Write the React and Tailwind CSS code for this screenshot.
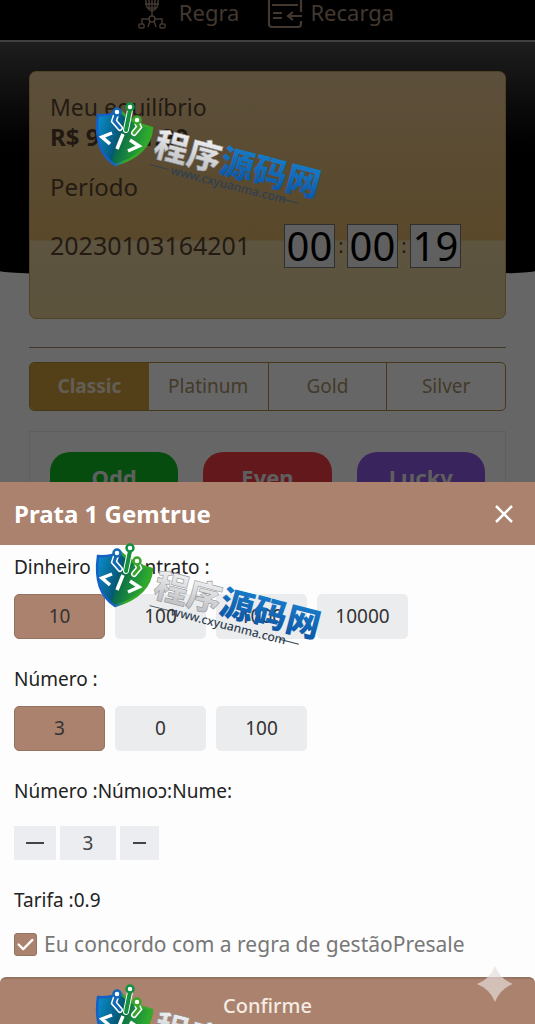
import { useState } from 'react';
import clsx from 'clsx';
import { HiCheck } from 'react-icons/hi';

const TABS = ['Classic', 'Platinum', 'Gold', 'Silver'];
const AMOUNTS = ['10', '100', '1000', '10000'];
const COUNTS = ['3', '0', '100'];
const TIMER = ['00', '00', '19'];
const BETS = [
  { label: 'Odd', color: 'bg-[#0ebe24]' },
  { label: 'Even', color: 'bg-[#f84048]' },
  { label: 'Lucky', color: 'bg-[#905ae8]' },
];

function RulesIcon() {
  return (
    <svg width="30" height="30" viewBox="0 0 30 30" fill="none" stroke="currentColor" strokeWidth="1.5" aria-hidden="true">
      <path d="M9 0v3q0 6 6 8 6-2 6-8V0M8 4h14M12 0v8M18 0v8M15 0v16M11 8h8" />
      <circle cx="15" cy="19" r="3" />
      <path d="M12 19H5v5M18 19h7v5M13 21l-2 6M17 21l2 6" />
      <rect x="2" y="24" width="5" height="4" rx="1" />
      <rect x="23" y="24" width="5" height="4" rx="1" />
    </svg>
  );
}

function RechargeIcon() {
  return (
    <svg width="36" height="30" viewBox="0 0 36 30" fill="none" stroke="currentColor" strokeWidth="2.2" aria-hidden="true">
      <path d="M34 12V0M2 0v24q0 3 3 3h26q3 0 3-3v-3M5 5h26M6 13h9M6 18h9M35 16H22M26 12l-5 4 5 4" />
    </svg>
  );
}

function Watermark() {
  return (
    <svg width="240" height="110" viewBox="0 0 240 110" className="block overflow-visible" aria-hidden="true">
      <defs>
        <linearGradient id="shield" x1="0" y1="0" x2="1" y2="0.3">
          <stop offset="0" stopColor="#0a92d4" />
          <stop offset="0.48" stopColor="#06587a" />
          <stop offset="0.52" stopColor="#0a6b4a" />
          <stop offset="1" stopColor="#2fae2c" />
        </linearGradient>
        <linearGradient id="rim" x1="0" y1="0" x2="1" y2="0">
          <stop offset="0.3" stopColor="#1560c8" />
          <stop offset="0.5" stopColor="#35a82a" />
        </linearGradient>
        <linearGradient id="silver" x1="0" y1="0" x2="0" y2="1">
          <stop offset="0" stopColor="#ffffff" />
          <stop offset="1" stopColor="#b4b6ba" />
        </linearGradient>
        <linearGradient id="blue" x1="0" y1="0" x2="0" y2="1">
          <stop offset="0" stopColor="#1b86d2" />
          <stop offset="1" stopColor="#0b4f9e" />
        </linearGradient>
      </defs>
      {/* shield */}
      <path d="M3 14q12 1 22-4 12 12 32 17-2 27-37 37Q-2 50 3 14z" fill="url(#shield)" stroke="url(#rim)" strokeWidth="2.5" />
      {/* circuit lines */}
      <g fill="none" strokeLinecap="round">
        <path d="M21 14l-2 6 6 7M35 9l-4 20M42 22l2 4-5 6" stroke="#fff" strokeWidth="6" />
        <path d="M21 14l-2 6 6 7" stroke="#1268b4" strokeWidth="3" />
        <path d="M35 9l-4 20" stroke="#159040" strokeWidth="4" />
        <path d="M42 22l2 4-5 6" stroke="#3aa52a" strokeWidth="3" />
      </g>
      <circle cx="22" cy="11" r="3.5" fill="#fff" stroke="#1268b4" strokeWidth="2.5" />
      <circle cx="35" cy="6" r="3.5" fill="#fff" stroke="#159040" strokeWidth="2.5" />
      <circle cx="42" cy="19" r="3.5" fill="#fff" stroke="#3aa52a" strokeWidth="2.5" />
      {/* code brackets */}
      <path d="M17 32 7 36l8 7M28 33l-6 15M35 39l9 6-11 5" fill="none" stroke="#fff" strokeWidth="3.5" />
      {/* wordmark */}
      <g transform="rotate(14.5 57 54)" className="font-['Noto_Sans_CJK_SC',sans-serif] font-black">
        <text x="57" y="54" fontSize="34" fill="url(#silver)" stroke="#8a8c90" strokeWidth="0.5">程序</text>
        <text x="125" y="54" fontSize="34" fill="url(#blue)">源码网</text>
      </g>
      <g transform="rotate(14.5 75 73)">
        <text x="75" y="73" fontSize="12" className="font-['Noto_Sans',sans-serif] font-medium" fill="#2f4050">www.cxyuanma.com</text>
        <path d="M53 69h20M187 69h20" stroke="#2f4050" strokeWidth="1" />
      </g>
    </svg>
  );
}

function OptionRow({ name, options, value, onChange }) {
  return (
    <div className="mt-[15px] flex gap-[10px]">
      {options.map((o) => (
        <button
          key={o}
          type="button"
          aria-label={`${name} ${o}`}
          onClick={() => onChange(o)}
          className={clsx(
            'h-[45px] w-[91px] rounded-[5px] text-[19px] text-[#333]',
            value === o ? 'border border-[#957361] bg-[#aa826d]' : 'bg-[#ebecee]'
          )}
        >
          {o}
        </button>
      ))}
    </div>
  );
}

function GamePage() {
  return (
    <div className="relative min-h-screen bg-white">
      <header className="flex h-[42px] justify-center gap-7 border-b-2 border-[#a0a0a0] bg-black pr-1 text-[#a58c78]">
        <a href="#regra" className="flex h-6 items-start gap-3 text-[22px] leading-6">
          <RulesIcon />
          Regra
        </a>
        <a href="#recarga" className="flex h-6 items-start gap-[7px] text-[22px] leading-6">
          <RechargeIcon />
          Recarga
        </a>
      </header>

      <div className="relative px-[29px] pt-[29px]">
        <div className="absolute inset-x-0 top-0 h-[234px] rounded-b-[50%_5px] bg-linear-to-b from-[#4c4c4c] to-black to-60%" />
        <section className="relative h-[248px] rounded-[7px] border border-[#c9a55c] bg-[linear-gradient(#e6c695,#dfb468_68%,#ead4a2_69%,#e6cf9c_85%,#e6cf98)] px-5 pt-5 text-[24px] text-[#5a4530]">
          <p className="text-[23px] leading-[30px]">Meu equilíbrio</p>
          <p className="leading-[30px] font-bold text-[#54402c]">R$ 99671.20</p>
          <p className="mt-5 leading-[30px]">Período</p>
          <div className="mt-[22px] flex items-center justify-between pr-6">
            <span className="text-[25px]">20230103164201</span>
            <div className="flex items-center text-[#5a4530]">
              {TIMER.map((t, i) => (
                <div key={i} className="flex items-center">
                  {i > 0 && <span className="w-3 text-center text-[20px]">:</span>}
                  <span className="flex h-[44px] w-[51px] items-center justify-center border border-[#777] bg-[#f0f0f0] text-[40px] leading-[42px] text-black">{t}</span>
                </div>
              ))}
            </div>
          </div>
        </section>

        <hr className="mt-7 border-[#a08d60]" />

        <div className="mt-[14px] grid h-[49px] grid-cols-4 overflow-hidden rounded-[5px] border border-[#b08c3c]">
          {TABS.map((t, i) => (
            <button
              key={t}
              type="button"
              className={clsx(
                'text-[19px]',
                i === 0 ? 'bg-[#d0a040] font-bold text-[#f4ead4]' : 'text-[#a9926a]',
                i > 1 && 'border-l border-[#b08c3c]'
              )}
            >
              {t}
            </button>
          ))}
        </div>

        <div className="mt-5 grid grid-cols-3 gap-[25px] border border-[#eee] px-5 pt-5">
          {BETS.map((b) => (
            <button key={b.label} type="button" className={clsx('h-[50px] rounded-[20px] text-[22px] font-bold text-[#eee]', b.color)}>
              {b.label}
            </button>
          ))}
        </div>
      </div>
    </div>
  );
}

function BetSheet() {
  const [amount, setAmount] = useState('10');
  const [count, setCount] = useState('3');
  const [qty, setQty] = useState(3);
  const [agree, setAgree] = useState(true);

  return (
    <div role="dialog" aria-label="Prata 1 Gemtrue" className="bg-[#fdfdfd] text-[19px] text-[#222]">
      <div className="flex h-[63px] items-center justify-between bg-[#aa826d] px-[14px] text-white">
        <h2 className="text-[24px] font-bold">Prata 1 Gemtrue</h2>
        <button type="button" aria-label="Fechar" className="px-2">
          <svg width="18" height="18" viewBox="0 0 18 18" fill="none" stroke="currentColor" strokeWidth="2.5">
            <path d="M1 1l16 16M17 1 1 17" />
          </svg>
        </button>
      </div>

      <div className="px-[14px] pt-[10px]">
        <p className="leading-6">Dinheiro do contrato :</p>
        <OptionRow name="Dinheiro" options={AMOUNTS} value={amount} onChange={setAmount} />

        <p className="mt-7 leading-6">Número :</p>
        <OptionRow name="Número" options={COUNTS} value={count} onChange={setCount} />

        <p className="mt-7 leading-6">Número :Númıoɔ:Nume:</p>
        <div className="mt-[23px] flex h-[34px] gap-1">
          <button type="button" aria-label="Menos" onClick={() => setQty(qty - 1)} className="flex w-[42px] items-center justify-center bg-[#ecedf0]">
            <span className="h-0.5 w-[18px] bg-[#444]" />
          </button>
          <input aria-label="Quantidade" value={qty} onChange={(e) => setQty(Number(e.target.value) || 0)} className="w-14 bg-[#ecedf0] text-center text-[#444]" />
          <button type="button" aria-label="Mais" onClick={() => setQty(qty + 1)} className="flex w-[39px] items-center justify-center bg-[#ecedf0]">
            <span className="h-0.5 w-[13px] bg-[#444]" />
          </button>
        </div>

        <p className="mt-7 leading-6">Tarifa :0.9</p>
        <label className="mt-5 flex items-center gap-[7px] text-[21px] leading-6 text-[#777]">
          <span className="relative flex size-[23px]">
            <input
              type="checkbox"
              checked={agree}
              onChange={(e) => setAgree(e.target.checked)}
              className="size-[23px] appearance-none rounded-[3px] border border-[#957361] checked:bg-[#aa826d]"
            />
            {agree && <HiCheck className="pointer-events-none absolute inset-0 size-[23px] text-white" />}
          </span>
          Eu concordo com a regra de gestãoPresale
        </label>
      </div>

      <button type="button" className="mt-[21px] block h-[47px] w-full rounded-t-[6px] border-t-2 border-[#957361] bg-[#aa826d] pt-2 text-[20px] font-medium text-[#f5ece4]">
        Confirme
      </button>
    </div>
  );
}

export default function App() {
  return (
    <div className="relative h-screen overflow-hidden font-['Noto_Sans',sans-serif]">
      <GamePage />

      <div className="absolute inset-0 flex flex-col justify-end bg-black/60">
        <BetSheet />
      </div>

      {/* Watermarks repeat down the whole screen */}
      <div className="pointer-events-none absolute inset-0 flex flex-col gap-[331px] overflow-hidden pt-[101px] pl-[95px]">
        <Watermark />
        <Watermark />
        <Watermark />
      </div>

      <svg width="36" height="36" viewBox="0 0 36 36" className="pointer-events-none absolute right-[22px] bottom-[22px]" aria-hidden="true">
        <path d="M18 0q5 13 18 18-13 5-18 18-5-13-18-18 13-5 18-18z" fill="#e4dcd8" opacity="0.7" />
      </svg>
    </div>
  );
}
